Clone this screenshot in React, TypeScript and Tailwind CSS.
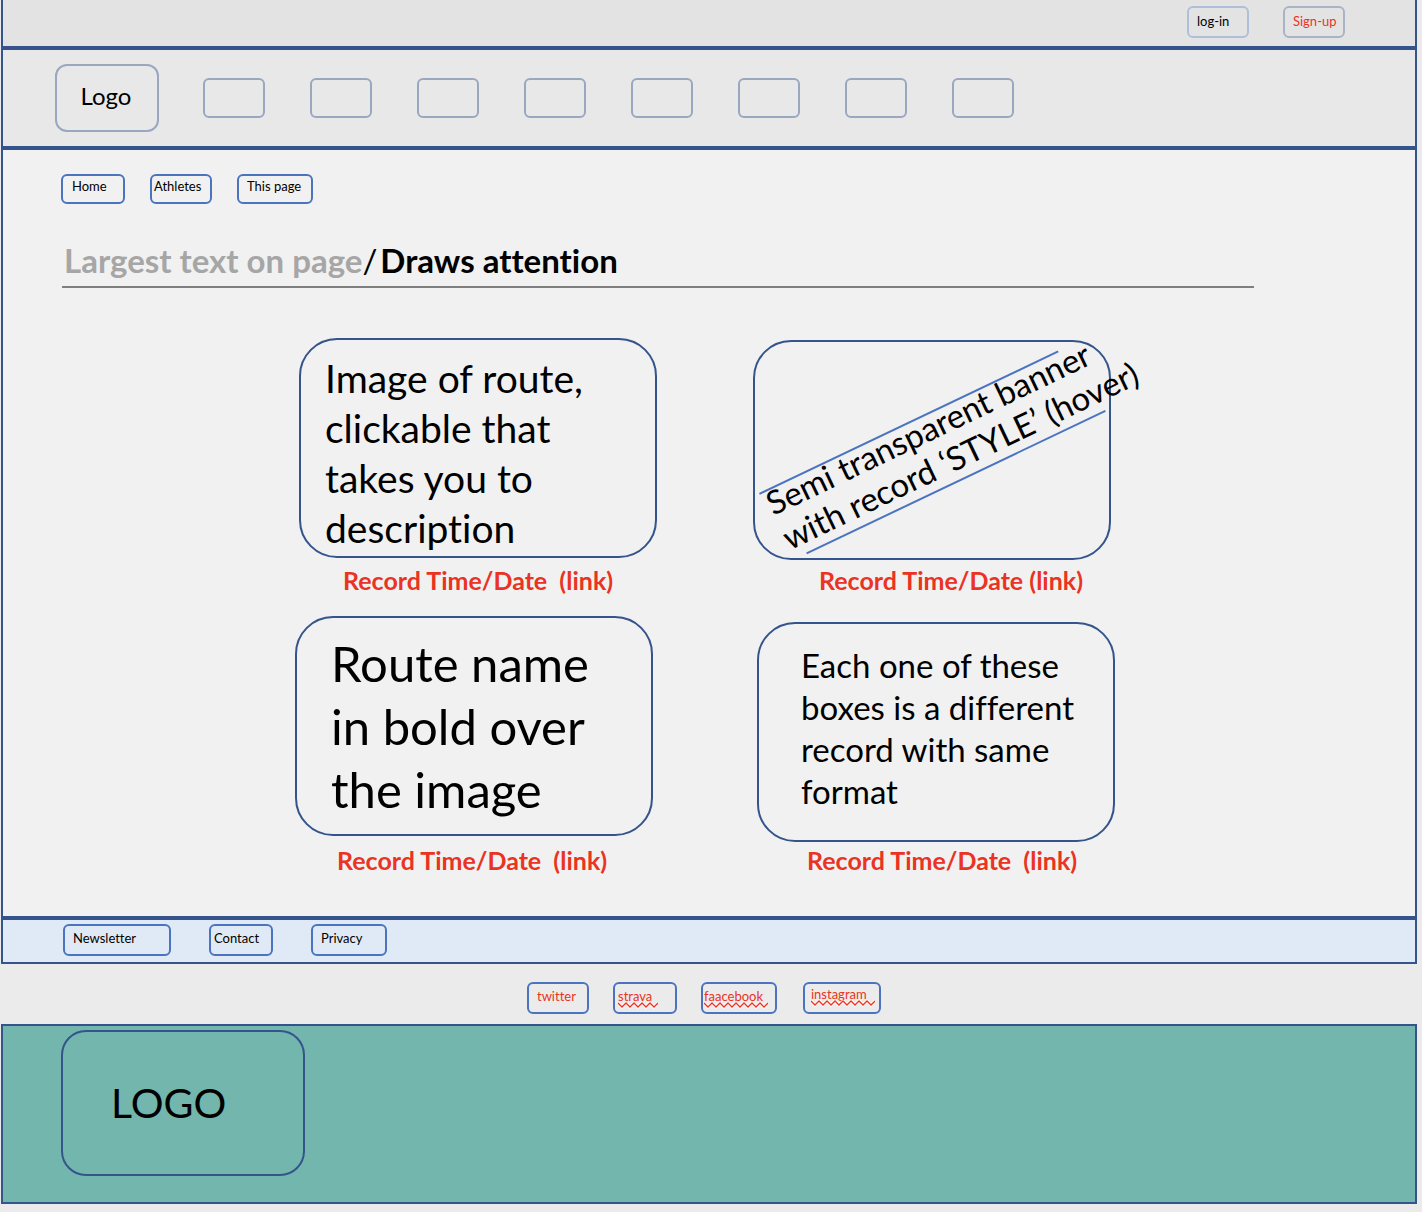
import type { ReactNode } from "react";

const navItems = [1, 2, 3, 4, 5, 6, 7, 8];

function Chip({ className, children }: { className: string; children: ReactNode }) {
  return (
    <a href="#" className={`block rounded-md border-2 text-[13px] leading-4 whitespace-nowrap ${className}`}>
      {children}
    </a>
  );
}

function Squiggle({ width }: { width: number }) {
  const points: string[] = [];
  for (let x = 0, i = 0; x <= width; x += 4, i++) {
    points.push(`${x},${i % 2 ? 5 : 1}`);
  }
  return (
    <svg className="absolute top-3.5 left-0" width={width} height="7" aria-hidden="true">
      <polyline points={points.join(" ")} fill="none" stroke="#fff" strokeWidth="3" />
      <polyline points={points.join(" ")} fill="none" stroke="#ea3323" strokeWidth="1.3" />
    </svg>
  );
}

function RecordCard({
  className = "",
  boxClass = "",
  captionClass,
  caption,
  children,
}: {
  className?: string;
  boxClass?: string;
  captionClass: string;
  caption: string;
  children: ReactNode;
}) {
  return (
    <article className={`flex w-[358px] flex-col ${className}`}>
      <a href="#" className={`relative block h-[220px] rounded-[38px] border-2 border-[#35548c] ${boxClass}`}>
        {children}
      </a>
      <a
        href="#"
        className={`mt-auto text-[25px] leading-8 font-bold whitespace-pre text-[#ea3323] ${captionClass}`}
      >
        {caption}
      </a>
    </article>
  );
}

export default function App() {
  return (
    <div className="min-h-screen bg-[#ebebeb] pr-[5px] pb-2 pl-px font-['Lato',sans-serif] text-black [font-variant-ligatures:none]">
      <div className="border-x-2 border-b-2 border-[#35548c]">
        <header>
          <div className="flex h-[50px] justify-end gap-[34px] border-b-4 border-[#35548c] bg-[#e3e3e3] pt-1.5 pr-[70px]">
            <button className="h-8 w-[62px] rounded-md border-2 border-[#b0bfd9] pb-0.5 pl-2 text-left text-[13px] leading-4">
              log-in
            </button>
            <button className="h-8 w-[62px] rounded-md border-2 border-[#a9b4c7] pb-0.5 pl-2 text-left text-[13px] leading-4 whitespace-nowrap text-[#ea3323]">
              Sign-up
            </button>
          </div>
          <nav
            aria-label="Main"
            className="flex h-[100px] items-center border-b-4 border-[#35548c] bg-[#e8e8e8] pl-[52px]"
          >
            <a
              href="#"
              className="flex h-[68px] w-[104px] items-center justify-center rounded-xl border-2 border-[#9aa7c0] pr-0.5 pb-1 text-2xl"
            >
              Logo
            </a>
            <div className="ml-11 flex gap-[45px]">
              {navItems.map((n) => (
                <a
                  key={n}
                  href="#"
                  aria-label={`Menu item ${n}`}
                  className="h-10 w-[62px] rounded-md border-2 border-[#9aa7c0]"
                />
              ))}
            </div>
          </nav>
        </header>

        <main className="border-b-4 border-[#35548c] bg-[#f1f1f1] pt-6 pb-10">
          <nav aria-label="Breadcrumb" className="flex gap-[25px] pl-[58px]">
            <Chip className="h-[30px] w-16 border-[#4a73c0] pt-0.5 pl-[9px]">Home</Chip>
            <Chip className="h-[30px] w-[62px] border-[#4a73c0] pt-0.5 pl-0.5">Athletes</Chip>
            <Chip className="h-[30px] w-[76px] border-[#4a73c0] pt-0.5 pl-2">This page</Chip>
          </nav>

          <h1 className="mt-9 mr-[161px] ml-[59px] flex h-12 border-b-2 border-[#7f7f7f] pl-0.5 text-[33px] leading-10 font-bold whitespace-nowrap">
            <span className="text-[#a6a6a6]">Largest text on page</span>
            <span className="font-normal">/</span>
            <span className="pl-[3px]">Draws attention</span>
          </h1>

          <section aria-label="Records" className="mt-[50px] flex flex-col gap-5 pr-2">
            <div className="flex justify-center gap-24">
              <RecordCard
                captionClass="pl-11"
                boxClass="pt-[13px] pl-6"
                caption="Record Time/Date  (link)"
              >
                <p className="text-[39px] leading-[50px] whitespace-nowrap">
                  Image of route,
                  <br />
                  clickable that
                  <br />
                  takes you to
                  <br />
                  description
                </p>
              </RecordCard>
              <RecordCard className="h-[258px] pt-0.5" captionClass="pl-[66px]" caption="Record Time/Date (link)">
                <div className="absolute top-[151px] left-1 flex w-[331px] origin-top-left rotate-[-25.5deg] flex-col">
                  <div className="h-0.5 bg-[#4a73c0]" />
                  <p className="-mt-[7px] mb-[3px] pl-[3px] text-[33px] leading-[38px] whitespace-nowrap">
                    Semi transparent banner
                    <br />
                    with record ‘STYLE’ (hover)
                  </p>
                  <div className="ml-[17px] h-0.5 w-[331px] bg-[#4a73c0]" />
                </div>
              </RecordCard>
            </div>
            <div className="flex justify-center gap-[104px]">
              <RecordCard
                captionClass="pl-[42px]"
                boxClass="pt-3.5 pl-[34px]"
                caption="Record Time/Date  (link)"
              >
                <p className="text-[49px] leading-[63px] whitespace-nowrap">
                  Route name
                  <br />
                  in bold over
                  <br />
                  the image
                </p>
              </RecordCard>
              <RecordCard
                className="h-[260px] pt-1.5"
                boxClass="pt-5 pl-[42px]"
                captionClass="pl-[50px]"
                caption="Record Time/Date  (link)"
              >
                <p className="text-[33px] leading-[42px] whitespace-nowrap">
                  Each one of these
                  <br />
                  boxes is a different
                  <br />
                  record with same
                  <br />
                  format
                </p>
              </RecordCard>
            </div>
          </section>
        </main>

        <nav aria-label="Footer" className="flex h-[42px] bg-[#e0eaf6] pt-1 pl-[60px]">
          <Chip className="h-8 w-[108px] border-[#4a73c0] pt-1 pl-2">Newsletter</Chip>
          <Chip className="ml-[38px] h-8 w-16 border-[#4a73c0] pt-1 pl-[3px]">Contact</Chip>
          <Chip className="ml-[38px] h-8 w-[76px] border-[#4a73c0] pt-1 pl-2">Privacy</Chip>
        </nav>
      </div>

      <nav aria-label="Social" className="flex h-[60px] justify-center pt-[18px] pr-[10px] text-[#ea3323]">
        <Chip className="h-8 w-[62px] border-[#4a73c0] pt-1 pl-2">twitter</Chip>
        <Chip className="ml-6 h-8 w-16 border-[#4a73c0] pt-1 pl-[3px]">
          <span className="relative block">
            strava
            <Squiggle width={40} />
          </span>
        </Chip>
        <Chip className="ml-6 h-8 w-[76px] border-[#4a73c0] pt-1 pl-px">
          <span className="relative block">
            faacebook
            <Squiggle width={64} />
          </span>
        </Chip>
        <Chip className="ml-[26px] h-8 w-[78px] border-[#4a73c0] pt-0.5 pl-1.5">
          <span className="relative block">
            instagram
            <Squiggle width={64} />
          </span>
        </Chip>
      </nav>

      <footer className="h-[180px] border-2 border-[#35548c] bg-[#72b6ad] pt-1 pl-[58px]">
        <a
          href="#"
          className="flex h-[146px] w-[244px] items-center rounded-[25px] border-2 border-[#35548c] pl-12 text-[41px]"
        >
          LOGO
        </a>
      </footer>
    </div>
  );
}
